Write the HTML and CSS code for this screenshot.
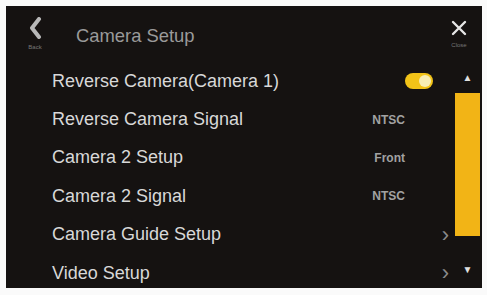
FILE: index.html
```html
<!DOCTYPE html>
<html>
<head>
    <meta charset="utf-8">
    <title>Camera Setup</title>
    <link rel="stylesheet" href="styles.css">
</head>
<body>
    <div class="panel">
        <div class="head">
            <div class="nav back">
                <svg viewBox="0 0 14 22" width="14" height="22"><path d="M11 2 L4 11 L11 20" fill="none" stroke="#b8b8b8" stroke-width="4" stroke-linecap="round" stroke-linejoin="round"/></svg>
                <span>Back</span>
            </div>
            <div class="title">Camera Setup</div>
            <div class="nav close">
                <svg viewBox="0 0 16 16" width="16" height="16"><path d="M2 2 L14 14 M14 2 L2 14" stroke="#e6e6e6" stroke-width="2.4" stroke-linecap="round"/></svg>
                <span>Close</span>
            </div>
        </div>
        <div class="main">
            <div class="list">
                <div class="row">
                    <span class="label">Reverse Camera(Camera 1)</span>
                    <span class="toggle"><i></i></span>
                </div>
                <div class="row val">
                    <span class="label">Reverse Camera Signal</span>
                    <span class="value">NTSC</span>
                </div>
                <div class="row val">
                    <span class="label">Camera 2 Setup</span>
                    <span class="value">Front</span>
                </div>
                <div class="row val">
                    <span class="label">Camera 2 Signal</span>
                    <span class="value">NTSC</span>
                </div>
                <div class="row more">
                    <span class="label">Camera Guide Setup</span>
                    <span class="chev">›</span>
                </div>
                <div class="row more">
                    <span class="label">Video Setup</span>
                    <span class="chev">›</span>
                </div>
            </div>
            <div class="scroll">
                <span class="arr">▲</span>
                <div class="thumb"></div>
                <div class="rest"></div>
                <span class="arr dn">▼</span>
            </div>
        </div>
    </div>
</body>
</html>
```

FILE: styles.css
```css
body {
    margin: 0;
    background: #fafafa;
    font-family: "Liberation Sans", Arial, sans-serif;
}

.panel {
    margin: 6px;
    width: 476px;
    height: 282px;
    background: #151211;
    display: flex;
    flex-direction: column;
    overflow: hidden;
}

.head {
    height: 56px;
    flex: 0 0 auto;
    display: flex;
    align-items: flex-start;
}

.nav {
    display: flex;
    flex-direction: column;
    align-items: center;
    font-size: 6px;
    color: #777;
}

.back {
    margin: 11px 0 0 22px;
}

.back span { margin-top: 5px; }

.title {
    margin: 19px 0 0 34px;
    font-size: 18.4px;
    color: #9a9a9a;
    flex: 1;
}

.close {
    margin: 14px 15px 0 0;
}

.close span { margin-top: 6px; }

.main {
    flex: 1;
    display: flex;
    min-height: 0;
}

.list {
    flex: 1;
    display: flex;
    flex-direction: column;
}

.row {
    height: 38.4px;
    flex: 0 0 auto;
    display: flex;
    align-items: center;
    justify-content: space-between;
    padding-left: 46px;
}

.label {
    font-size: 18px;
    color: #d8d8d8;
}

.toggle {
    width: 28px;
    height: 16px;
    border-radius: 8px;
    background: #f2c318;
    margin-right: 22px;
    display: flex;
    justify-content: flex-end;
    align-items: center;
    padding: 0 2px;
    box-sizing: border-box;
}

.toggle i {
    width: 12px;
    height: 12px;
    border-radius: 50%;
    background: #f8eeb4;
}

.value {
    font-size: 12px;
    font-weight: bold;
    color: #a2a2a2;
    margin-right: 50px;
}

.chev {
    font-size: 22px;
    color: #8a8a8a;
    margin-right: 6px;
}

.scroll {
    width: 25px;
    margin-right: 2px;
    display: flex;
    flex-direction: column;
    align-items: center;
}

.arr {
    font-size: 10px;
    color: #e0e0e0;
    height: 30px;
    line-height: 30px;
    margin-top: 1px;
}

.thumb {
    width: 25px;
    height: 143px;
    background: #f2b416;
}

.rest { flex: 1; }

.arr.dn {
    height: 28px;
    line-height: 28px;
    margin: 0 0 4px;
}
```
